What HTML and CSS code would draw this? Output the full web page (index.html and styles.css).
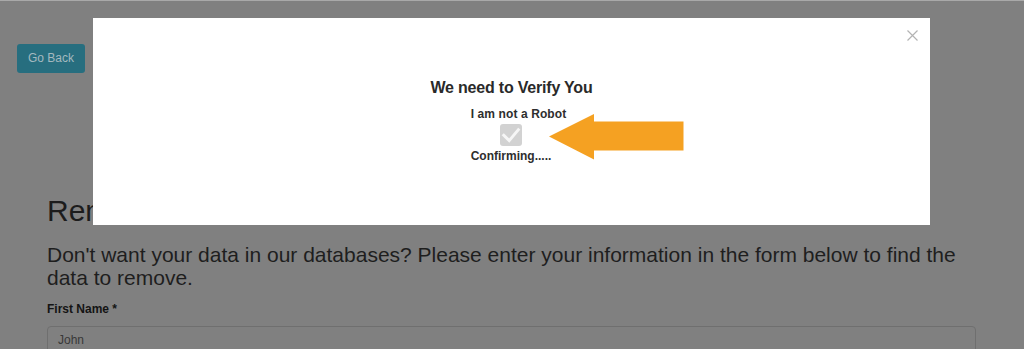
FILE: index.html
```html
<!DOCTYPE html>
<html lang="en">
<head>
<meta charset="utf-8">
<title>Remove Data</title>
<link rel="stylesheet" href="styles.css">
</head>
<body>
<div class="topline"></div>
<main class="container">
  <a class="btn-back" href="#">Go Back</a>
  <h1 class="page-title">Remove Data</h1>
  <p class="lead">Don't want your data in our databases? Please enter your information in the form below to find the data to remove.</p>
  <label class="field-label" for="fname">First Name *</label>
  <div class="input">John</div>
</main>

<div class="modal">
  <svg class="close" width="11" height="11" viewBox="0 0 11 11" aria-hidden="true">
    <path d="M0.5 0.5 L10.5 10.5 M10.5 0.5 L0.5 10.5" stroke="#b3b3b3" stroke-width="1.2" fill="none"/>
  </svg>
  <div class="modal-body">
    <h2 class="modal-title">We need to Verify You</h2>
    <div class="verify">
      <div class="small-bold">I am not a Robot</div>
      <div class="checkbox">
        <svg width="22" height="22" viewBox="0 0 22 22" aria-hidden="true">
          <path d="M3.8 11.3 L9.2 16.6 L18.3 5.8" stroke="#f6f6f6" stroke-width="3" fill="none" stroke-linecap="square"/>
        </svg>
      </div>
      <div class="small-bold confirm">Confirming.....</div>
    </div>
  </div>
  <svg class="arrow" width="135" height="46" viewBox="0 0 135 46" aria-hidden="true">
    <polygon points="0,22.5 45,0 45,7.5 134.5,7.5 134.5,36.5 45,36.5 45,45.5" fill="#f5a122"/>
  </svg>
</div>
</body>
</html>
```

FILE: styles.css
```css
html, body {
  margin: 0;
  padding: 0;
}
body {
  background: #808080;
  font-family: "Liberation Sans", Arial, sans-serif;
  color: #1e1e1e;
  height: 349px;
  overflow: hidden;
}
.topline {
  height: 1px;
  background: #a9a9a9;
}
.container {
  width: 929px;
  padding-left: 47px;
  padding-top: 43px;
  display: flex;
  flex-direction: column;
  align-items: flex-start;
}
.btn-back {
  display: block;
  background: #276e7f;
  color: #a3b9bf;
  font-size: 12px;
  line-height: 17px;
  padding: 6px 11px;
  border-radius: 3px;
  text-decoration: none;
  margin-left: -30px;
}
.page-title {
  font-size: 30px;
  line-height: 33px;
  font-weight: normal;
  margin: 121px 0 0 0;
  color: #1c1c1c;
}
.lead {
  font-size: 21px;
  line-height: 23px;
  margin: 16px 0 0 0;
  color: #1e1e1e;
}
.field-label {
  font-size: 12px;
  line-height: 14px;
  font-weight: bold;
  margin-top: 13px;
  color: #141414;
}
.input {
  box-sizing: border-box;
  align-self: stretch;
  margin-top: 10px;
  height: 34px;
  border: 1px solid #6f6f6f;
  border-radius: 4px;
  padding: 3px 10px;
  font-size: 12px;
  line-height: 20px;
  color: #383838;
}

.modal {
  position: absolute;
  left: 93px;
  top: 18px;
  width: 837px;
  height: 207px;
  background: #ffffff;
}
.modal-body {
  display: flex;
  flex-direction: column;
  align-items: center;
  padding-top: 61px;
}
.modal-title {
  margin: 0;
  font-size: 16px;
  line-height: 18px;
  letter-spacing: -0.2px;
  font-weight: bold;
  color: #2a2a2a;
}
.verify {
  display: flex;
  flex-direction: column;
  align-items: flex-start;
  margin-left: 14px;
}
.small-bold {
  margin-top: 10px;
  font-size: 12px;
  line-height: 14px;
  font-weight: bold;
  letter-spacing: 0.1px;
  color: #2e2e2e;
}
.checkbox {
  margin: 3px 0 0 29px;
  width: 22px;
  height: 22px;
  background: #d2d2d2;
  border-radius: 3px;
  display: flex;
}
.confirm {
  margin-top: 3px;
  letter-spacing: 0;
}
.close {
  position: absolute;
  right: 12px;
  top: 12px;
}
.arrow {
  position: absolute;
  left: 456px;
  top: 96px;
}
```
